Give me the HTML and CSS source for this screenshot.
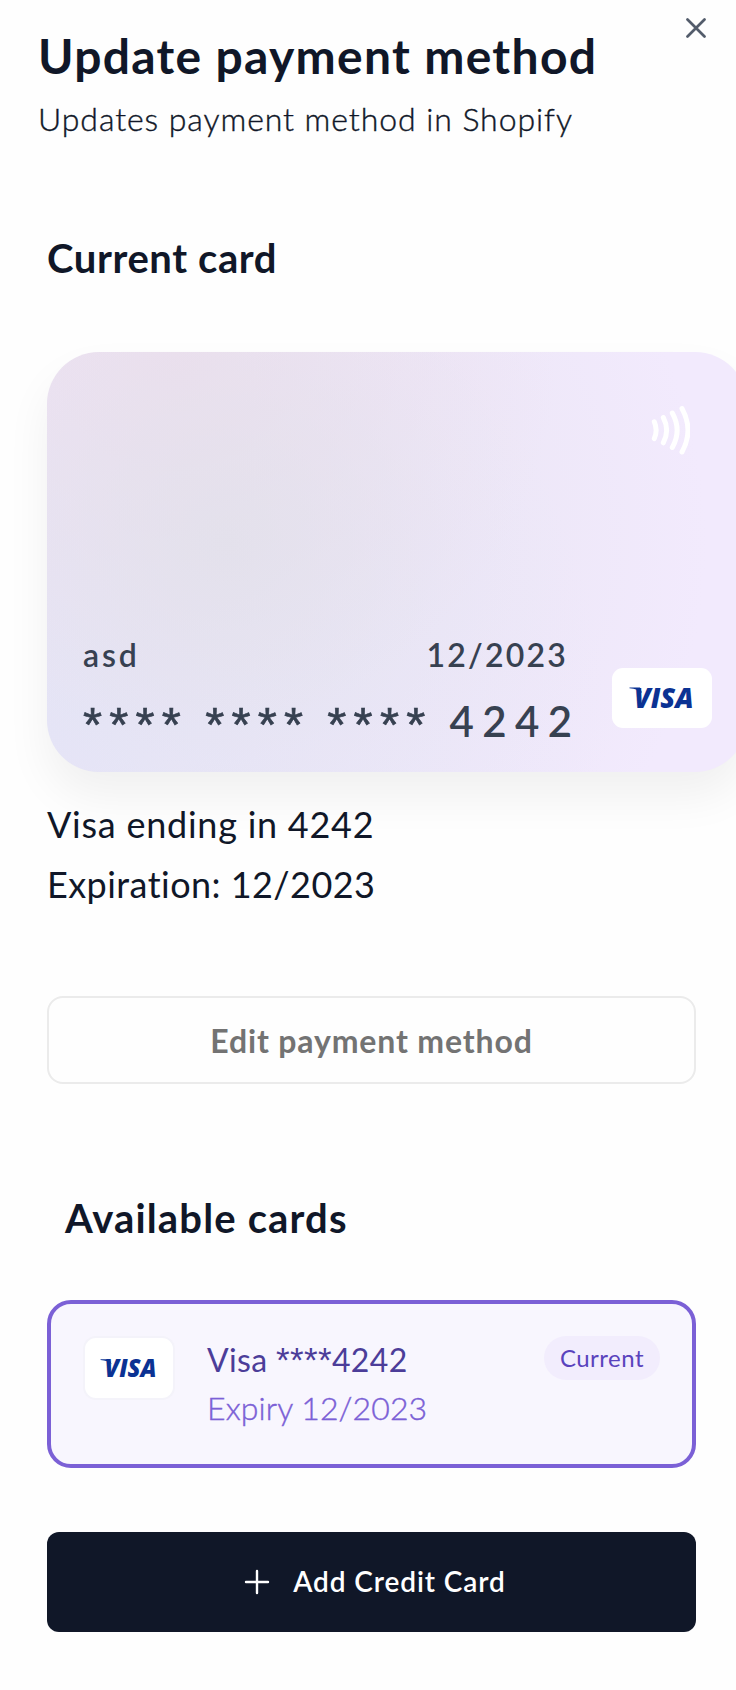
FILE: index.html
```html
<!DOCTYPE html>
<html lang="en">
<head>
<meta charset="utf-8">
<title>Update payment method</title>
<link rel="stylesheet" href="styles.css">
</head>
<body>
<main class="dialog">
  <header class="header">
    <div class="heading">
      <h1 class="title">Update payment method</h1>
      <p class="subtitle">Updates payment method in Shopify</p>
    </div>
    <button class="close" aria-label="Close">
      <svg width="20" height="20" viewBox="0 0 20 20"><path d="M1.5 1.5 18.5 18.5M18.5 1.5 1.5 18.5"/></svg>
    </button>
  </header>

  <section class="current">
    <h2 class="section-title">Current card</h2>
    <div class="bank-card">
      <svg class="contactless" width="40" height="50" viewBox="0 0 40 50"><path d="M4.3 16.8Q8 25.3 4.3 33.6M13.3 12.5Q20 25.3 13.3 37.8M22.3 8Q32 25.3 22.3 42.5M32 3.5Q44 25.3 32 47"/></svg>
      <div class="card-bottom">
        <div class="card-data">
          <div class="card-row"><span class="holder">asd</span><span class="exp">12/2023</span></div>
          <div class="number"><span class="stars">****</span><span class="stars">****</span><span class="stars">****</span><span class="last4">4242</span></div>
        </div>
        <div class="brand brand-lg">
          <svg width="66" height="40" viewBox="0 -8 66 40"><path d="M.5 1.5H11L13 7Q9 2.8 .5 2.2Z"/><text x="5" y="22" textLength="59.5" lengthAdjust="spacingAndGlyphs">VISA</text></svg>
        </div>
      </div>
    </div>
    <div class="details">
      <p class="ending">Visa ending in 4242</p>
      <p class="expiration">Expiration: 12/2023</p>
    </div>
    <button class="edit">Edit payment method</button>
  </section>

  <section class="available">
    <h2 class="section-title inset">Available cards</h2>
    <div class="option">
      <div class="brand brand-sm">
        <svg width="58" height="35" viewBox="0 -8 66 40"><path d="M.5 1.5H11L13 7Q9 2.8 .5 2.2Z"/><text x="5" y="22" textLength="59.5" lengthAdjust="spacingAndGlyphs">VISA</text></svg>
      </div>
      <div class="option-text">
        <p class="option-name">Visa <span class="mask">****</span>4242</p>
        <p class="option-exp">Expiry 12/2023</p>
      </div>
      <div class="pill">Current</div>
    </div>
    <button class="add">
      <svg width="26" height="26" viewBox="0 0 26 26"><path d="M13 2V24M2 13H24"/></svg>
      <span>Add Credit Card</span>
    </button>
  </section>
</main>
</body>
</html>
```
FILE: styles.css
```css
* { box-sizing: border-box; }
body {
  margin: 0;
  background: #fefefe;
  color: #101728;
  font-family: Lato, "Open Sans", sans-serif;
  overflow: hidden;
}
h1, h2, p { margin: 0; white-space: nowrap; }
button { font-family: inherit; padding: 0; border: 0; background: none; }
svg { display: block; flex: none; }
.dialog { width: 736px; height: 1690px; overflow: hidden; }
.header {
  display: flex;
  justify-content: space-between;
  align-items: flex-start;
  padding: 18px 30px 0 38px;
}
.heading { padding-top: 6px; }
.title { font-size: 48px; line-height: 64px; font-weight: 700; letter-spacing: 1.3px; }
.subtitle {
  margin-top: 9px;
  font-size: 32px;
  line-height: 44px;
  font-weight: 300;
  letter-spacing: .93px;
  -webkit-text-stroke: .4px currentColor;
}
.close svg { fill: none; stroke: #535c6b; stroke-width: 2.7; stroke-linecap: round; }
.section-title { font-size: 40px; line-height: 48px; font-weight: 700; letter-spacing: .6px; }
.section-title.inset { padding-left: 18px; letter-spacing: 1.15px; }
.current { padding: 93px 40px 0 47px; }
.bank-card {
  width: 700px;
  height: 420px;
  margin-top: 70px;
  padding: 53px 35px 9px 36px;
  border-radius: 52px;
  display: flex;
  flex-direction: column;
  justify-content: space-between;
  color: #374151;
  background:
    radial-gradient(circle at 180px 190px, rgba(224, 224, 232, .75), rgba(224, 224, 232, .35) 220px, rgba(224, 224, 232, 0) 480px),
    radial-gradient(circle at 130px 0, #f0dff0, rgba(240, 223, 240, 0) 380px),
    radial-gradient(circle at 0 380px, #e7e6fc, rgba(231, 230, 252, 0) 560px),
    #f2eafd;
  box-shadow: 0 24px 46px rgba(0, 0, 0, .06);
}
.contactless {
  align-self: flex-end;
  margin-right: 22px;
  fill: none;
  stroke: #fff;
  stroke-width: 5;
  stroke-linecap: round;
}
.card-bottom { display: flex; justify-content: space-between; align-items: center; }
.card-data { width: 500px; }
.card-row { display: flex; justify-content: space-between; padding-right: 15px; font-size: 32px; line-height: 44px; font-weight: 600; }
.holder { letter-spacing: 2.9px; }
.exp { letter-spacing: 2.2px; }
.number { display: flex; height: 86px; font-weight: 600; }
.stars {
  margin-right: 17.1px;
  font: 400 49px/95px "Liberation Sans", sans-serif;
  letter-spacing: 7.2px;
  -webkit-text-stroke: .6px currentColor;
}
.last4 { font-size: 42px; line-height: 88px; letter-spacing: 8.4px; }
.brand { display: flex; align-items: center; justify-content: center; background: #fff; flex: none; }
.brand path { fill: #0b3293; }
.brand text { fill: #0b3293; font: italic 900 28px "Open Sans", sans-serif; }
.brand-lg { width: 100px; height: 60px; margin-bottom: 1px; border-radius: 11px; }
.brand-sm { width: 92px; height: 64px; border-radius: 13px; border: 2px solid #f4f3fa; }
.details { margin-top: 23px; font-size: 36px; line-height: 59.5px; }
.ending { letter-spacing: .75px; }
.expiration { letter-spacing: .45px; }
.edit {
  display: block;
  width: 649px;
  height: 88px;
  margin-top: 82px;
  border: 2px solid #ebebeb;
  border-radius: 16px;
  color: #737373;
  font-size: 32px;
  font-weight: 700;
  letter-spacing: .85px;
}
.available { padding: 110px 40px 0 47px; }
.option {
  display: flex;
  align-items: flex-start;
  height: 168px;
  margin-top: 58px;
  padding: 32px 32px 0;
  border: 4px solid #7b60d6;
  border-radius: 24px;
  background: #f8f6fe;
}
.option-text { margin-left: 32px; flex: 1; font-size: 32px; line-height: 48px; color: #4c3d99; }
.option-name { height: 48px; line-height: 47px; letter-spacing: .35px; }
.mask { font: 400 35px/1 "Liberation Sans", sans-serif; }
.option-exp { line-height: 47px; color: #7b60d6; font-weight: 300; letter-spacing: .1px; -webkit-text-stroke: .4px currentColor; }
.pill {
  width: 116px;
  height: 44px;
  border-radius: 22px;
  background: #f2edfd;
  color: #5a43bd;
  font-size: 24px;
  line-height: 43px;
  letter-spacing: .5px;
  text-align: center;
}
.add {
  display: flex;
  align-items: center;
  justify-content: center;
  gap: 23px;
  width: 649px;
  height: 100px;
  margin-top: 64px;
  padding: 0 0 2px 7px;
  border-radius: 12px;
  background: #101728;
  color: #fff;
  font-size: 28px;
  font-weight: 600;
  letter-spacing: .9px;
}
.add svg { margin-top: 2px; fill: none; stroke: #fff; stroke-width: 2.4; stroke-linecap: round; }
```
